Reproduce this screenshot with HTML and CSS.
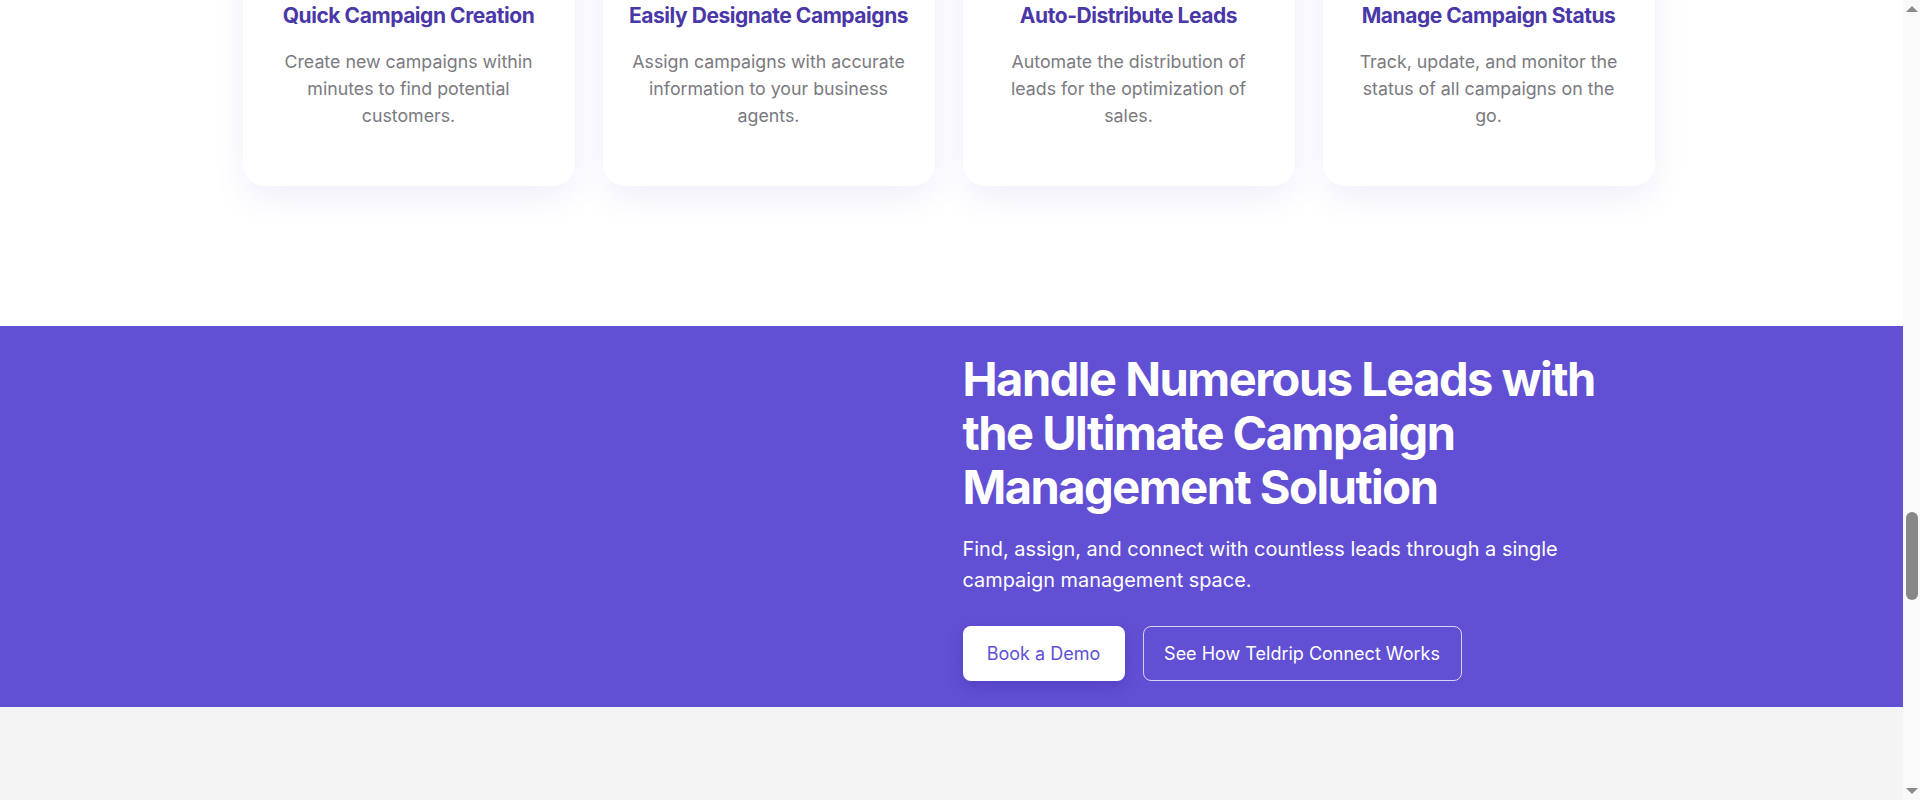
FILE: index.html
```html
<!DOCTYPE html>
<html lang="en">
<head>
<meta charset="utf-8">
<title>Teldrip Connect - Campaign Management</title>
<link rel="stylesheet" href="styles.css">
</head>
<body>
<div class="page">
  <section class="features">
    <div class="container cards">
      <div class="card">
        <h3 class="card-title">Quick Campaign Creation</h3>
        <p class="card-text">Create new campaigns within minutes to find potential customers.</p>
      </div>
      <div class="card">
        <h3 class="card-title">Easily Designate Campaigns</h3>
        <p class="card-text">Assign campaigns with accurate information to your business agents.</p>
      </div>
      <div class="card">
        <h3 class="card-title">Auto-Distribute Leads</h3>
        <p class="card-text">Automate the distribution of leads for the optimization of sales.</p>
      </div>
      <div class="card">
        <h3 class="card-title">Manage Campaign Status</h3>
        <p class="card-text">Track, update, and monitor the status of all campaigns on the go.</p>
      </div>
    </div>
  </section>

  <section class="hero">
    <div class="container hero-grid">
      <div class="hero-media"></div>
      <div class="hero-copy">
        <h2 class="hero-title">Handle Numerous Leads with the Ultimate Campaign Management Solution</h2>
        <p class="hero-text">Find, assign, and connect with countless leads through a single campaign management space.</p>
        <div class="hero-actions">
          <a class="btn btn-solid" href="#">Book a Demo</a>
          <a class="btn btn-outline" href="#">See How Teldrip Connect Works</a>
        </div>
      </div>
    </div>
  </section>

  <section class="after"></section>
</div>
<div class="scrollbar">
  <div class="sb-arrow sb-up"></div>
  <div class="sb-track"><div class="sb-thumb"></div></div>
  <div class="sb-arrow sb-down"></div>
</div>
</body>
</html>
```

FILE: styles.css
```css
* { box-sizing: border-box; }

html, body {
  margin: 0;
  padding: 0;
  height: 100%;
}

body {
  display: flex;
  overflow: hidden;
  background: #ffffff;
  font-family: "Inter", "Lato", sans-serif;
}

.page {
  flex: 1;
  min-width: 0;
  display: flex;
  flex-direction: column;
}

.container {
  width: 1412px;
  margin-left: calc(50% - 709px);
}

/* Features cards */
.features {
  margin-top: -80px;
  padding-bottom: 140px;
}

.cards {
  display: grid;
  grid-template-columns: repeat(4, 1fr);
  gap: 28px;
}

.card {
  background: #ffffff;
  border-radius: 22px;
  padding: 81px 20px 57px;
  text-align: center;
  box-shadow: 0 12px 34px rgba(97, 80, 212, 0.09);
}

.card-title {
  margin: 0;
  font-size: 21px;
  line-height: 30px;
  font-weight: 700;
  color: #4a37a8;
  letter-spacing: -0.45px;
}

.card-text {
  margin: 17px auto 0;
  max-width: 280px;
  font-size: 17.8px;
  line-height: 27px;
  font-weight: 400;
  color: #7a7a80;
}

/* Hero band */
.hero {
  background: #6150d4;
  padding: 26px 0 26px;
}

.hero-grid {
  display: grid;
  grid-template-columns: 1fr 1fr;
  gap: 28px;
}

.hero-copy {
  color: #ffffff;
}

.hero-title {
  margin: 0;
  max-width: 660px;
  font-size: 47px;
  line-height: 54px;
  font-weight: 700;
  letter-spacing: -1.5px;
}

.hero-text {
  margin: 20px 0 0;
  max-width: 620px;
  font-size: 19.9px;
  line-height: 31px;
  font-weight: 400;
}

.hero-actions {
  display: flex;
  gap: 18px;
  margin-top: 30px;
}

.btn {
  display: inline-flex;
  align-items: center;
  justify-content: center;
  height: 55px;
  border-radius: 8px;
  font-size: 18px;
  text-decoration: none;
  font-weight: 400;
}

.btn-solid {
  width: 162px;
  background: #ffffff;
  color: #6150d4;
  box-shadow: 0 6px 16px rgba(40, 25, 140, 0.25);
}

.btn-outline {
  width: 319px;
  color: #ffffff;
  border: 1px solid rgba(255, 255, 255, 0.75);
}

.after {
  flex: 1;
  background: #f4f4f4;
}

/* Scrollbar */
.scrollbar {
  width: 17px;
  background: #f9f9f9;
  display: flex;
  flex-direction: column;
  align-items: center;
}

.sb-arrow {
  width: 0;
  height: 0;
  border-left: 6px solid transparent;
  border-right: 6px solid transparent;
  margin: 6px 0;
}

.sb-up { border-bottom: 6px solid #8a8a8a; }
.sb-down { border-top: 6px solid #8a8a8a; }

.sb-track {
  flex: 1;
  width: 100%;
  display: flex;
  flex-direction: column;
  align-items: center;
  padding-top: 494px;
}

.sb-thumb {
  width: 12px;
  height: 88px;
  border-radius: 6px;
  background: #888888;
}
```
